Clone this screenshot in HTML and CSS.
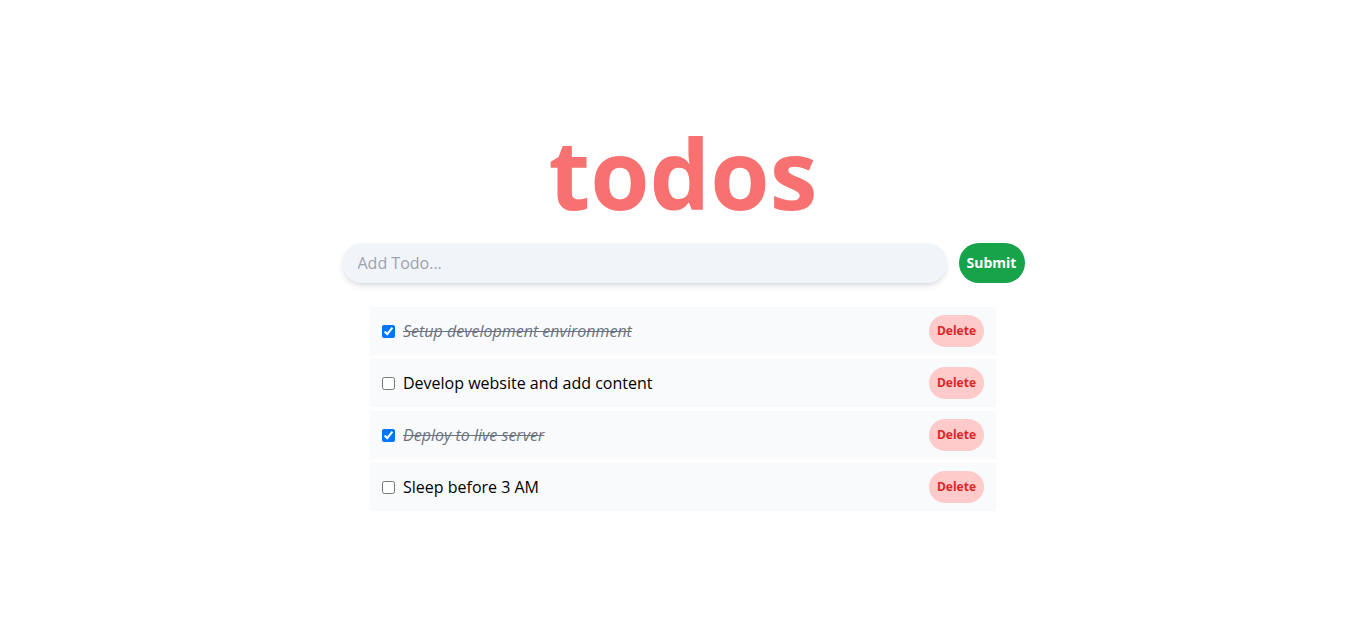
FILE: index.html
```html
<!DOCTYPE html>
<html>
<head>
<meta charset="utf-8">
<link rel="stylesheet" href="styles.css">
</head>
<body>
<main class="app">
  <h1 class="title">todos</h1>
  <form class="add-form">
    <input class="add-input" type="text" placeholder="Add Todo...">
    <button class="submit-btn" type="button">Submit</button>
  </form>
  <ul class="todo-list">
    <li class="todo">
      <label class="todo-label"><input type="checkbox" checked><span class="todo-text done">Setup development environment</span></label>
      <button class="delete-btn" type="button">Delete</button>
    </li>
    <li class="todo">
      <label class="todo-label"><input type="checkbox"><span class="todo-text">Develop website and add content</span></label>
      <button class="delete-btn" type="button">Delete</button>
    </li>
    <li class="todo">
      <label class="todo-label"><input type="checkbox" checked><span class="todo-text done">Deploy to live server</span></label>
      <button class="delete-btn" type="button">Delete</button>
    </li>
    <li class="todo">
      <label class="todo-label"><input type="checkbox"><span class="todo-text">Sleep before 3 AM</span></label>
      <button class="delete-btn" type="button">Delete</button>
    </li>
  </ul>
</main>
</body>
</html>
```

FILE: styles.css
```css
* { box-sizing: border-box; }
html, body { margin: 0; padding: 0; background: #fff; }
body { font-family: "Open Sans", "Noto Sans", sans-serif; color: #000; }

.app {
  display: flex;
  flex-direction: column;
  align-items: center;
  padding-top: 125px;
}

.title {
  margin: 0 0 22px;
  font-size: 96px;
  line-height: 1;
  font-weight: 700;
  color: #f87171;
}

.add-form {
  display: flex;
  gap: 12px;
  width: 683px;
}

.add-input {
  flex: 1;
  height: 40px;
  border: none;
  border-radius: 9999px;
  background: #f1f5f9;
  padding: 0 16px;
  font-family: inherit;
  font-size: 16px;
  color: #111;
  outline: none;
  box-shadow: 0 4px 6px -1px rgba(0,0,0,0.1), 0 2px 4px -2px rgba(0,0,0,0.1);
}
.add-input::placeholder { color: #9ca3af; }

.submit-btn {
  height: 40px;
  padding: 0 0 2px;
  width: 66px;
  border: none;
  border-radius: 9999px;
  background: #16a34a;
  color: #fff;
  font-family: inherit;
  font-weight: 700;
  font-size: 14px;
}

.todo-list {
  list-style: none;
  margin: 24px 0 0;
  padding: 0;
  width: 626px;
  display: flex;
  flex-direction: column;
  gap: 4px;
}

.todo {
  height: 48px;
  background: #f8fafc;
  display: flex;
  align-items: center;
  justify-content: space-between;
  padding: 0 12px;
}

.todo-label {
  display: flex;
  align-items: center;
  gap: 8px;
}
.todo-label input { margin: 0; width: 13px; height: 13px; }

.todo-text { font-size: 16px; }
.todo-text.done {
  font-style: italic;
  text-decoration: line-through;
  color: #6b7280;
}

.delete-btn {
  height: 32px;
  width: 55px;
  border: none;
  border-radius: 9999px;
  background: #fecaca;
  color: #dc2626;
  font-family: inherit;
  font-weight: 700;
  font-size: 12px;
  padding: 0 0 2px;
}
```
